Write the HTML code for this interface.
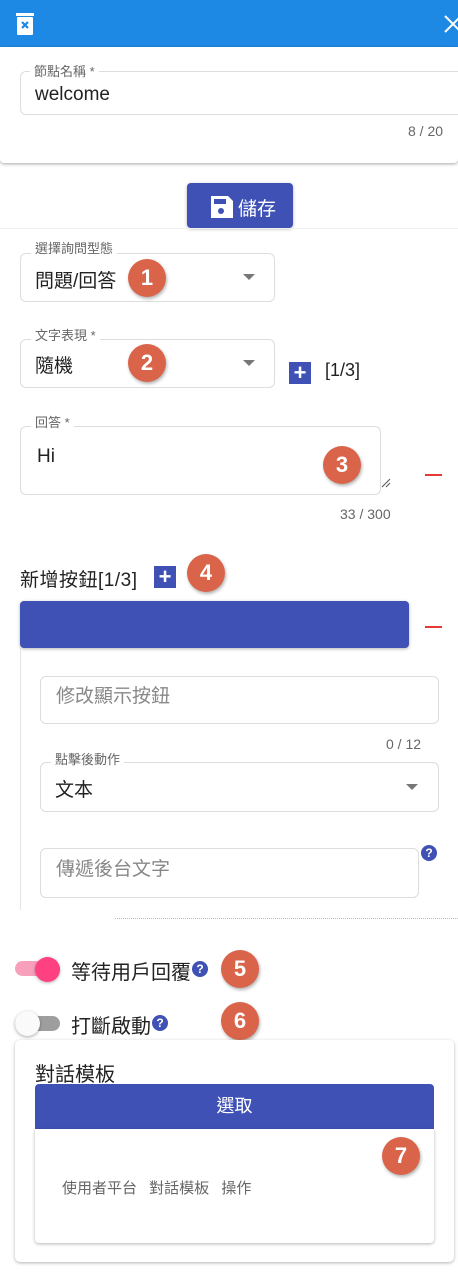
<!DOCTYPE html>
<html><head><meta charset="utf-8"><style>
*{box-sizing:border-box;margin:0;padding:0}
body{width:458px;height:1277px;position:relative;background:#fff;font-family:"Liberation Sans","Noto Sans CJK TC",sans-serif;overflow:hidden;color:#222}
.a{position:absolute}
.box{position:absolute;border:1px solid #ddd;border-radius:6px;background:#fff}
.lbl{position:absolute;background:#fff;font-size:13px;color:#666;padding:0 4px;line-height:13px}
.val{position:absolute;font-size:19px;color:#222;line-height:22px}
.ph{position:absolute;font-size:19px;color:#888;line-height:22px}
.badge{position:absolute;width:38px;height:38px;border-radius:50%;background:#d9644a;color:#fff;font-weight:bold;font-size:22px;text-align:center;line-height:38px;box-shadow:1px 2px 3px rgba(0,0,0,.3);font-family:"Liberation Sans",sans-serif}
.arrow{position:absolute;width:0;height:0;border-left:6px solid transparent;border-right:6px solid transparent;border-top:6px solid #777}
.plus{position:absolute;width:22px;height:22px;background:#3f51b5;color:#fff;text-align:center;line-height:22px;font-size:22px;font-weight:bold}
.minus{position:absolute;width:17px;height:2px;background:#e53935}
.help{position:absolute;width:16px;height:16px;border-radius:50%;background:#3f51b5;color:#fff;font-size:12px;font-weight:bold;text-align:center;line-height:16px}
.cnt{position:absolute;font-size:14px;color:#666}
</style></head><body>
<div class="a" style="left:0;top:0;width:458px;height:47px;background:#1e88e5"></div>
<svg class="a" style="left:15px;top:12px" width="20" height="24" viewBox="0 0 20 24"><rect x="1" y="1" width="18" height="3" fill="#fff"/><rect x="2" y="5" width="16" height="18" rx="1" fill="#fff"/><path d="M7 10l6 6M13 10l-6 6" stroke="#1e88e5" stroke-width="2.2"/></svg>
<svg class="a" style="left:444px;top:15px" width="14" height="18"><path d="M1 1l16 16M17 1L1 17" stroke="#fff" stroke-width="2"/></svg>
<div class="a" style="left:0;top:47px;width:458px;height:116px;background:#fff;box-shadow:0 1px 3px rgba(0,0,0,.35);border-radius:0 0 4px 4px"></div>
<div class="box" style="left:20px;top:71px;width:445px;height:44px"></div>
<div class="lbl" style="left:30px;top:65px">節點名稱 *</div>
<div class="val" style="left:35px;top:84px;font-size:19px">welcome</div>
<div class="cnt" style="left:408px;top:123px">8 / 20</div>
<div class="a" style="left:187px;top:183px;width:106px;height:45px;background:#3f51b5;border-radius:4px;box-shadow:0 1px 3px rgba(0,0,0,.3)"></div>
<svg class="a" style="left:211px;top:196px" width="22" height="22"><path d="M0 0h17l5 5v17H0z" fill="#fff"/><rect x="3" y="3" width="12" height="5" fill="#3f51b5"/><circle cx="10" cy="15" r="3" fill="#3f51b5"/></svg>
<div class="a" style="left:238px;top:194px;color:#fff;font-size:19px">儲存</div>
<div class="a" style="left:0;top:228px;width:458px;height:1px;background:#f0f0f0"></div>

<div class="box" style="left:20px;top:253px;width:255px;height:49px"></div>
<div class="lbl" style="left:31px;top:242px">選擇詢問型態</div>
<div class="val" style="left:35px;top:271px">問題/回答</div>
<div class="arrow" style="left:243px;top:274px"></div>
<div class="badge" style="left:128px;top:259px">1</div>

<div class="box" style="left:20px;top:339px;width:255px;height:49px"></div>
<div class="lbl" style="left:31px;top:329px">文字表現 *</div>
<div class="val" style="left:35px;top:356px">隨機</div>
<div class="arrow" style="left:243px;top:360px"></div>
<div class="badge" style="left:128px;top:344px">2</div>
<div class="plus" style="left:289px;top:362px">+</div>
<div class="a" style="left:325px;top:360px;font-size:18px">[1/3]</div>

<div class="box" style="left:20px;top:426px;width:361px;height:69px"></div>
<div class="lbl" style="left:31px;top:416px">回答 *</div>
<div class="val" style="left:37px;top:446px">Hi</div>
<svg class="a" style="left:381px;top:478px" width="10" height="10"><path d="M1 9L9 1M5 9L9 5" stroke="#555" stroke-width="1"/></svg>
<div class="badge" style="left:323px;top:446px">3</div>
<div class="minus" style="left:425px;top:474px"></div>
<div class="cnt" style="left:340px;top:506px">33 / 300</div>

<div class="a" style="left:20px;top:565px;font-size:19px;letter-spacing:0.5px">新增按鈕[1/3]</div>
<div class="plus" style="left:154px;top:566px">+</div>
<div class="badge" style="left:187px;top:554px">4</div>
<div class="a" style="left:20px;top:601px;width:389px;height:47px;background:#3f51b5;border-radius:4px;box-shadow:0 1px 3px rgba(0,0,0,.3)"></div>
<div class="minus" style="left:425px;top:626px"></div>
<div class="a" style="left:20px;top:648px;width:1px;height:262px;background:#e4e4e4"></div>

<div class="box" style="left:40px;top:676px;width:399px;height:48px"></div>
<div class="ph" style="left:56px;top:686px">修改顯示按鈕</div>
<div class="cnt" style="left:386px;top:736px">0 / 12</div>

<div class="box" style="left:40px;top:762px;width:399px;height:50px"></div>
<div class="lbl" style="left:51px;top:753px">點擊後動作</div>
<div class="val" style="left:55px;top:780px">文本</div>
<div class="arrow" style="left:406px;top:784px"></div>

<div class="box" style="left:40px;top:848px;width:379px;height:50px"></div>
<div class="ph" style="left:56px;top:859px">傳遞後台文字</div>
<div class="help" style="left:421px;top:845px">?</div>
<div class="a" style="left:115px;top:918px;width:343px;border-top:1px dotted #bbb"></div>

<div class="a" style="left:15px;top:961px;width:45px;height:15px;border-radius:8px;background:#f8a0bb"></div>
<div class="a" style="left:35px;top:957px;width:25px;height:25px;border-radius:50%;background:#ff4081;box-shadow:0 1px 3px rgba(0,0,0,.3)"></div>
<div class="a" style="left:71px;top:956px;font-size:20px">等待用戶回覆</div>
<div class="help" style="left:192px;top:961px">?</div>
<div class="badge" style="left:221px;top:950px">5</div>

<div class="a" style="left:15px;top:1016px;width:45px;height:15px;border-radius:8px;background:#9e9e9e"></div>
<div class="a" style="left:15px;top:1011px;width:25px;height:25px;border-radius:50%;background:#fafafa;box-shadow:0 1px 3px rgba(0,0,0,.35)"></div>
<div class="a" style="left:71px;top:1010px;font-size:20px">打斷啟動</div>
<div class="help" style="left:152px;top:1015px">?</div>
<div class="badge" style="left:221px;top:1002px">6</div>

<div class="a" style="left:15px;top:1040px;width:439px;height:222px;border-radius:5px;background:#fff;box-shadow:0 1px 3px rgba(0,0,0,.3)"></div>
<div class="a" style="left:35px;top:1058px;font-size:20px">對話模板</div>
<div class="a" style="left:35px;top:1084px;width:399px;height:45px;background:#3f51b5;border-radius:4px 4px 0 0;color:#fff;font-size:18px;text-align:center;line-height:45px">選取</div>
<div class="a" style="left:35px;top:1129px;width:399px;height:114px;background:#fff;border-radius:0 0 4px 4px;box-shadow:0 1px 3px rgba(0,0,0,.3)"></div>
<div class="a" style="left:62px;top:1177px;font-size:15px;color:#666;word-spacing:8px">使用者平台 對話模板 操作</div>
<div class="badge" style="left:382px;top:1137px">7</div>
</body></html>
